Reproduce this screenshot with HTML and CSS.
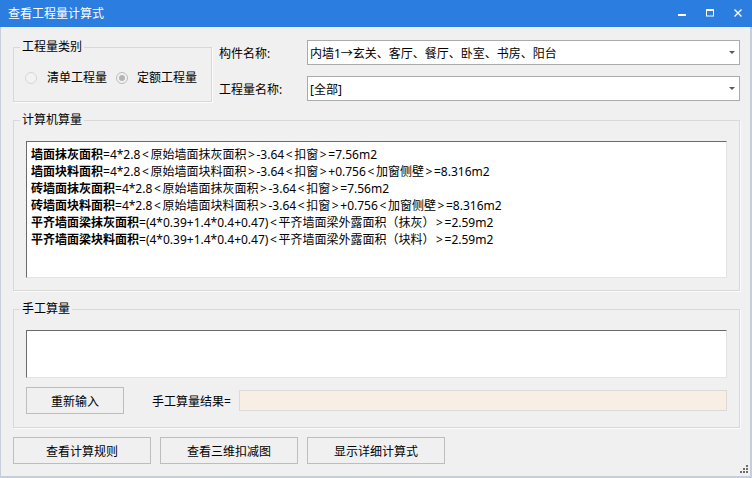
FILE: index.html
```html
<!DOCTYPE html>
<html lang="zh-CN">
<head>
<meta charset="utf-8">
<title>查看工程量计算式</title>
<link rel="stylesheet" href="styles.css">
</head>
<body>
<div class="window">
  <header class="titlebar">
    <span class="title">查看工程量计算式</span>
    <div class="controls">
      <span class="ctl"><svg width="8" height="8" viewBox="0 0 8 8"><rect x="0" y="5" width="8" height="2" fill="#fff"/></svg></span>
      <span class="ctl"><svg width="8" height="8" viewBox="0 0 8 8"><rect x="0.5" y="0.5" width="7" height="6.5" fill="none" stroke="#fff" stroke-width="1"/><rect x="0" y="0" width="8" height="2" fill="#fff"/></svg></span>
      <span class="ctl"><svg width="8" height="8" viewBox="0 0 8 8"><path d="M0.5 0.5 L7.5 7.5 M7.5 0.5 L0.5 7.5" stroke="#fff" stroke-width="1.4" fill="none"/></svg></span>
    </div>
  </header>
  <main class="content">
    <div class="top">
      <fieldset class="group type-group">
        <legend>工程量类别</legend>
        <div class="radios">
          <label class="radio"><span class="dot"></span>清单工程量</label>
          <label class="radio checked"><span class="dot"></span>定额工程量</label>
        </div>
      </fieldset>
      <div class="fields">
        <div class="field">
          <span class="flabel">构件名称:</span>
          <div class="select"><span class="value">内墙1→玄关、客厅、餐厅、卧室、书房、阳台</span><i class="caret"></i></div>
        </div>
        <div class="field">
          <span class="flabel">工程量名称:</span>
          <div class="select"><span class="value">[全部]</span><i class="caret"></i></div>
        </div>
      </div>
    </div>

    <fieldset class="group">
      <legend>计算机算量</legend>
      <div class="group-body calc-body">
        <div class="textbox formulas">
          <div><b>墙面抹灰面积</b>=4*2.8<span class="a">&lt;</span>原始墙面抹灰面积<span class="a">&gt;</span>-3.64<span class="a">&lt;</span>扣窗<span class="a">&gt;</span>=7.56m2</div>
          <div><b>墙面块料面积</b>=4*2.8<span class="a">&lt;</span>原始墙面块料面积<span class="a">&gt;</span>-3.64<span class="a">&lt;</span>扣窗<span class="a">&gt;</span>+0.756<span class="a">&lt;</span>加窗侧壁<span class="a">&gt;</span>=8.316m2</div>
          <div><b>砖墙面抹灰面积</b>=4*2.8<span class="a">&lt;</span>原始墙面抹灰面积<span class="a">&gt;</span>-3.64<span class="a">&lt;</span>扣窗<span class="a">&gt;</span>=7.56m2</div>
          <div><b>砖墙面块料面积</b>=4*2.8<span class="a">&lt;</span>原始墙面块料面积<span class="a">&gt;</span>-3.64<span class="a">&lt;</span>扣窗<span class="a">&gt;</span>+0.756<span class="a">&lt;</span>加窗侧壁<span class="a">&gt;</span>=8.316m2</div>
          <div><b>平齐墙面梁抹灰面积</b>=(4*0.39+1.4*0.4+0.47)<span class="a">&lt;</span>平齐墙面梁外露面积（抹灰）<span class="a">&gt;</span>=2.59m2</div>
          <div><b>平齐墙面梁块料面积</b>=(4*0.39+1.4*0.4+0.47)<span class="a">&lt;</span>平齐墙面梁外露面积（块料）<span class="a">&gt;</span>=2.59m2</div>
        </div>
      </div>
    </fieldset>

    <fieldset class="group">
      <legend>手工算量</legend>
      <div class="group-body manual-body">
        <div class="textbox manual-input"></div>
        <div class="manual-row">
          <button class="btn reinput">重新输入</button>
          <span class="result-label">手工算量结果=</span>
          <div class="result"></div>
        </div>
      </div>
    </fieldset>

    <div class="actions">
      <button class="btn wide">查看计算规则</button>
      <button class="btn wide">查看三维扣减图</button>
      <button class="btn wide">显示详细计算式</button>
    </div>
  </main>
  <svg class="grip" width="8" height="8" viewBox="0 0 8 8">
    <rect x="6" y="0" width="2" height="2" fill="#6f6f6f"/>
    <rect x="3" y="3" width="2" height="2" fill="#6f6f6f"/>
    <rect x="6" y="3" width="2" height="2" fill="#6f6f6f"/>
    <rect x="0" y="6" width="2" height="2" fill="#6f6f6f"/>
    <rect x="3" y="6" width="2" height="2" fill="#6f6f6f"/>
    <rect x="6" y="6" width="2" height="2" fill="#6f6f6f"/>
  </svg>
</div>
</body>
</html>
```

FILE: styles.css
```css
* { box-sizing: border-box; }
html, body { margin: 0; padding: 0; }
body {
  width: 752px;
  height: 478px;
  overflow: hidden;
  background: #f0f0f0;
  font-family: "Noto Sans", "Noto Sans CJK SC", sans-serif;
  font-size: 12px;
  color: #000;
}
.window {
  position: relative;
  width: 752px;
  height: 478px;
  background: #f0f0f0;
  border-left: 1px solid #c6cddb;
  border-right: 2px solid #c6cddb;
  border-bottom: 2px solid #c6cddb;
  display: flex;
  flex-direction: column;
}
.titlebar {
  height: 27px;
  margin: 0 -2px 0 -1px;
  background: #2b7de0;
  color: #fff;
  display: flex;
  align-items: center;
  padding-left: 8px;
}
.title { font-size: 12px; line-height: 27px; }
.controls { margin-left: auto; display: flex; }
.ctl {
  width: 28px;
  height: 27px;
  display: flex;
  align-items: center;
  justify-content: center;
}
.ctl svg { display: block; margin-top: -1px; }

.content {
  padding: 12px 10px 0 12px;
  display: flex;
  flex-direction: column;
}
.top { display: flex; align-items: flex-start; }

fieldset.group {
  margin: 0;
  padding: 0;
  min-width: 0;
  border: 1px solid #d8d8d8;
  box-shadow: 1px 1px 0 #fbfbfb;
}
fieldset.group legend {
  margin-left: 6px;
  padding: 0 2px;
  line-height: 16px;
  font-size: 12px;
}
.type-group { width: 199px; flex: none; }
.radios {
  display: flex;
  align-items: center;
  height: 16px;
  margin: 15px 0 15px 11px;
  gap: 9px;
}
.radio { display: flex; align-items: center; line-height: 16px; }
.dot {
  width: 12px;
  height: 12px;
  border-radius: 50%;
  border: 1px solid #d6d6d6;
  background: #f2f2f2;
  margin-right: 10px;
  display: flex;
  align-items: center;
  justify-content: center;
}
.radio.checked .dot { border-color: #bcbcbc; margin-right: 9px; }
.radio.checked .dot::after {
  content: "";
  width: 6px;
  height: 6px;
  border-radius: 50%;
  background: #b4b4b4;
}

.fields {
  flex: 1;
  margin-left: 7px;
  padding-top: 1px;
  display: flex;
  flex-direction: column;
  gap: 11px;
}
.field { display: flex; align-items: center; height: 25px; }
.flabel { width: 88px; flex: none; }
.select {
  flex: 1;
  height: 25px;
  background: #fff;
  border: 1px solid #ababab;
  padding-left: 2px;
  display: flex;
  align-items: center;
}
.select .value { flex: 1; white-space: nowrap; overflow: hidden; }
.caret {
  width: 0;
  height: 0;
  border-left: 3px solid transparent;
  border-right: 3px solid transparent;
  border-top: 3px solid #5a5a5a;
  margin-right: 4px;
}

.content > fieldset.group + fieldset.group,
.top + fieldset.group { margin-top: 10px; }

.group-body { padding: 13px 12px 12px 12px; }
.manual-body { padding-bottom: 13px; }
.textbox {
  background: #fff;
  border-style: solid;
  border-width: 1px;
  border-color: #6b6b6b #e3e3e3 #e3e3e3 #6b6b6b;
}
.formulas {
  height: 137px;
  padding: 4px 4px;
  line-height: 17px;
  white-space: nowrap;
}
.formulas b { font-weight: 700; }
.formulas .a { margin: 0 1.6px; }
.manual-input { height: 48px; }
.manual-row {
  margin-top: 9px;
  height: 27px;
  display: flex;
  align-items: center;
}
.btn {
  font: inherit;
  font-size: 12px;
  color: #000;
  height: 27px;
  background: #f0f0f0;
  border: 1px solid #bdbdbd;
  padding: 0;
  border-radius: 0;
}
.reinput { width: 98px; flex: none; }
.result-label { margin-left: 28px; }
.result {
  flex: 1;
  margin-left: 8px;
  height: 21px;
  background: #f9eee4;
  border: 1px solid #dcd9d6;
}
.actions {
  margin-top: 9px;
  display: flex;
  gap: 9px;
}
.wide { width: 138px; }
.grip { position: absolute; right: 2px; bottom: 3px; display: block; }
```
